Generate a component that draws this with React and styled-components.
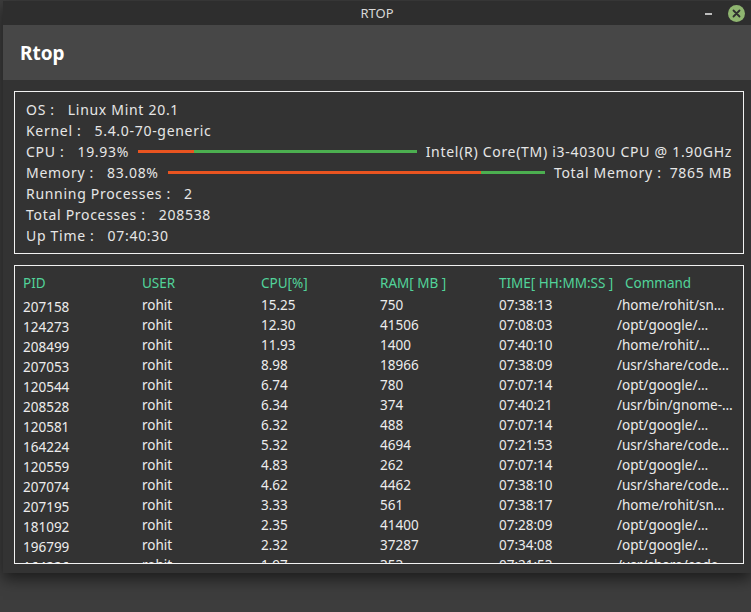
import React from "react";
import styled, { createGlobalStyle } from "styled-components";

const Global = createGlobalStyle`
  html, body {
    margin: 0;
    padding: 0;
    background: #3d3d3d;
    font-family: "Noto Sans", "DejaVu Sans", sans-serif;
  }
`;

const Desktop = styled.div`
  width: 751px;
  height: 612px;
  overflow: hidden;
  padding: 1px 0 0 3px;
  box-sizing: border-box;
  background: #3d3d3d;
`;

const Window = styled.div`
  width: 748px;
  height: 572px;
  display: flex;
  flex-direction: column;
  background: #333333;
  box-shadow: 0 6px 14px rgba(0, 0, 0, 0.55);
`;

const TitleBar = styled.div`
  height: 24px;
  flex: none;
  display: flex;
  align-items: center;
  justify-content: center;
  position: relative;
  background: #2e2e2e;
  color: #d8d8d8;
  font-size: 13px;
`;

const TitleButtons = styled.div`
  position: absolute;
  right: 6px;
  top: 4px;
  display: flex;
  align-items: center;
  gap: 16px;
`;

const Minimize = styled.div`
  width: 7px;
  height: 2px;
  background: #bdbdbd;
`;

const Close = styled.div`
  width: 17px;
  height: 17px;
  border-radius: 50%;
  background: #8fb570;
  display: flex;
  align-items: center;
  justify-content: center;
`;

const HeaderBar = styled.div`
  height: 55px;
  flex: none;
  display: flex;
  align-items: center;
  padding-left: 17px;
  background: #474747;
  color: #ffffff;
  font-size: 19px;
  font-weight: 700;
`;

const Content = styled.div`
  flex: 1;
  min-height: 0;
  display: flex;
  flex-direction: column;
  gap: 11px;
  padding: 11px 7px 9px 11px;
`;

const InfoBox = styled.div`
  border: 1px solid #f2f2f2;
  padding: 7px 11px 7px 11px;
  color: #e6e6e6;
  font-size: 14px;
  letter-spacing: 0.7px;
`;

const InfoLine = styled.div`
  height: 21px;
  display: flex;
  align-items: center;
  gap: 9px;
  white-space: nowrap;
`;

const Label = styled.span`
  margin-right: ${(p) => (p.$wide ? "8px" : "4px")};
`;

const Bar = styled.div`
  flex: 1;
  height: 3px;
  background: #4caf50;
`;

const BarFill = styled.div`
  height: 100%;
  background: #e95420;
`;

const TableBox = styled.div`
  flex: 1;
  min-height: 0;
  overflow: hidden;
  border: 1px solid #f2f2f2;
  padding: 4px 0 0 8px;
`;

const Grid = styled.div`
  display: grid;
  grid-template-columns: 119px 119px 119px 119px 118px 1fr;
`;

const HeadCell = styled.div`
  height: 25px;
  display: flex;
  align-items: center;
  color: #52d39a;
  font-size: 13.5px;
  white-space: nowrap;
  padding-left: ${(p) => (p.$shift ? "8px" : "0")};
`;

const Cell = styled.div`
  height: 20px;
  display: flex;
  align-items: center;
  color: #ececec;
  font-size: 13.5px;
  white-space: nowrap;
  padding-top: ${(p) => (p.$low ? "4px" : "0")};
  box-sizing: border-box;
`;

const rows = [
  ["207158", "rohit", "15.25", "750", "07:38:13", "/home/rohit/sn…"],
  ["124273", "rohit", "12.30", "41506", "07:08:03", "/opt/google/…"],
  ["208499", "rohit", "11.93", "1400", "07:40:10", "/home/rohit/…"],
  ["207053", "rohit", "8.98", "18966", "07:38:09", "/usr/share/code…"],
  ["120544", "rohit", "6.74", "780", "07:07:14", "/opt/google/…"],
  ["208528", "rohit", "6.34", "374", "07:40:21", "/usr/bin/gnome-…"],
  ["120581", "rohit", "6.32", "488", "07:07:14", "/opt/google/…"],
  ["164224", "rohit", "5.32", "4694", "07:21:53", "/usr/share/code…"],
  ["120559", "rohit", "4.83", "262", "07:07:14", "/opt/google/…"],
  ["207074", "rohit", "4.62", "4462", "07:38:10", "/usr/share/code…"],
  ["207195", "rohit", "3.33", "561", "07:38:17", "/home/rohit/sn…"],
  ["181092", "rohit", "2.35", "41400", "07:28:09", "/opt/google/…"],
  ["196799", "rohit", "2.32", "37287", "07:34:08", "/opt/google/…"],
  ["164226", "rohit", "1.97", "353", "07:21:53", "/usr/share/code…"],
];

const heads = ["PID", "USER", "CPU[%]", "RAM[ MB ]", "TIME[ HH:MM:SS ]", "Command"];

const App = () => {
  return (
    <Desktop>
      <Global />
      <Window>
        <TitleBar>
          RTOP
          <TitleButtons>
            <Minimize />
            <Close>
              <svg width="9" height="9" viewBox="0 0 9 9">
                <path d="M1.5 1.5 L7.5 7.5 M7.5 1.5 L1.5 7.5" stroke="#2e2e2e" strokeWidth="1.8" strokeLinecap="round" />
              </svg>
            </Close>
          </TitleButtons>
        </TitleBar>
        <HeaderBar>Rtop</HeaderBar>
        <Content>
          <InfoBox>
            <InfoLine>
              <Label>OS :</Label>Linux Mint 20.1
            </InfoLine>
            <InfoLine>
              <Label>Kernel :</Label>5.4.0-70-generic
            </InfoLine>
            <InfoLine>
              <Label>CPU :</Label>19.93%
              <Bar>
                <BarFill style={{ width: "19.93%" }} />
              </Bar>
              Intel(R) Core(TM) i3-4030U CPU @ 1.90GHz
            </InfoLine>
            <InfoLine>
              <Label>Memory :</Label>83.08%
              <Bar>
                <BarFill style={{ width: "83.08%" }} />
              </Bar>
              <span>
                <Label $wide>Total Memory :</Label>7865 MB
              </span>
            </InfoLine>
            <InfoLine>
              <Label>Running Processes :</Label>2
            </InfoLine>
            <InfoLine>
              <Label>Total Processes :</Label>208538
            </InfoLine>
            <InfoLine>
              <Label>Up Time :</Label>07:40:30
            </InfoLine>
          </InfoBox>
          <TableBox>
            <Grid>
              {heads.map((h, i) => (
                <HeadCell key={h} $shift={i === 5}>
                  {h}
                </HeadCell>
              ))}
              {rows.map((r) =>
                r.map((v, i) => (
                  <Cell key={r[0] + i} $low={i === 0}>
                    {v}
                  </Cell>
                ))
              )}
            </Grid>
          </TableBox>
        </Content>
      </Window>
    </Desktop>
  );
};

export default App;
